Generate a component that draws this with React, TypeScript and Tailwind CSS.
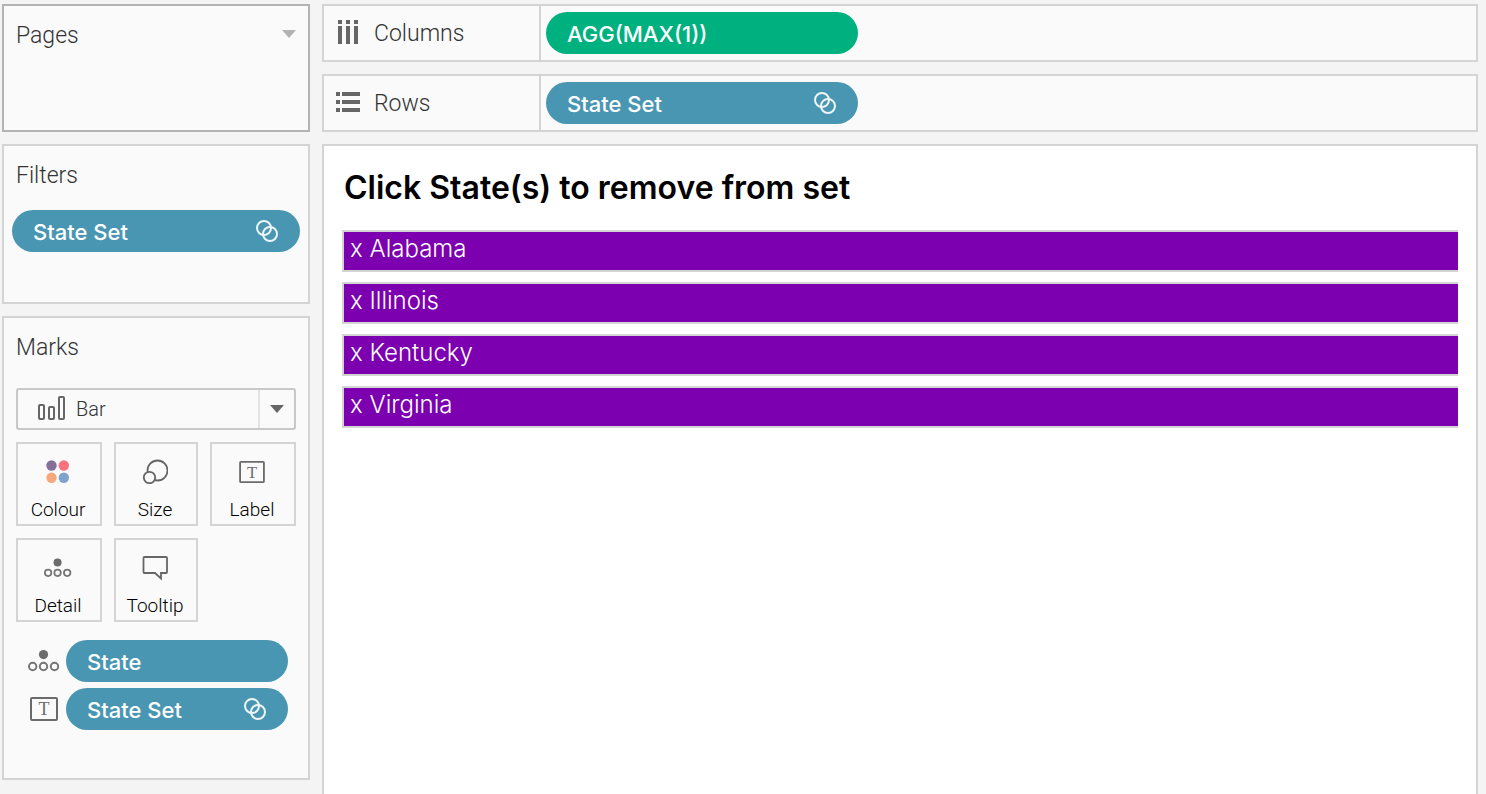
import type { ReactNode } from 'react'
import { clsx } from 'clsx'

function SetIcon() {
  return (
    <svg width="24" height="24" viewBox="0 0 24 24" fill="none" stroke="#eef5f9" strokeWidth="2" aria-hidden="true">
      <circle cx="9" cy="9" r="7" />
      <circle cx="15" cy="15" r="7" />
    </svg>
  )
}

function ColumnsIcon() {
  return (
    <svg width="24" height="24" viewBox="0 0 24 24" fill="#666" aria-hidden="true">
      <path d="M2 0h4v4H2zM10 0h4v4h-4zM18 0h4v4h-4zM2 6h4v18H2zM10 6h4v18h-4zM18 6h4v18h-4z" />
    </svg>
  )
}

function RowsIcon() {
  return (
    <svg width="24" height="24" viewBox="0 0 24 24" fill="#666" aria-hidden="true">
      <path d="M0 2h4v4H0zM0 10h4v4H0zM0 18h4v4H0zM6 2h18v4H6zM6 10h18v4H6zM6 18h18v4H6z" />
    </svg>
  )
}

function BarIcon() {
  return (
    <svg width="28" height="24" viewBox="0 0 28 24" fill="none" stroke="#666" strokeWidth="2" aria-hidden="true">
      <rect x="1" y="9" width="5" height="14" rx="1" />
      <rect x="11" y="11" width="5" height="12" rx="1" />
      <rect x="21" y="1" width="5" height="22" rx="1" />
    </svg>
  )
}

function ColourIcon() {
  return (
    <svg width="24" height="24" viewBox="0 0 24 24" aria-hidden="true">
      <circle cx="5.5" cy="5.5" r="5.2" fill="#85709a" />
      <circle cx="17.8" cy="5.5" r="5.2" fill="#fa7280" />
      <circle cx="5.5" cy="17.8" r="5.2" fill="#f4a87c" />
      <circle cx="17.8" cy="17.8" r="5.2" fill="#7fa3cb" />
    </svg>
  )
}

function SizeIcon() {
  return (
    <svg width="26" height="26" viewBox="0 0 26 26" fill="#fafafa" stroke="#666" strokeWidth="1.8" aria-hidden="true">
      <circle cx="15.5" cy="11.5" r="10" />
      <circle cx="7.5" cy="18.5" r="5.7" />
    </svg>
  )
}

function LabelIcon({ className }: { className?: string }) {
  return (
    <svg className={className} viewBox="0 0 28 24" fill="none" stroke="#6b6b6b" strokeWidth="2" aria-hidden="true">
      <rect x="1" y="1" width="26" height="22" rx="1" />
      <text
        x="14"
        y="18"
        textAnchor="middle"
        fontFamily="Liberation Serif, serif"
        fontSize="18"
        fill="#6b6b6b"
        stroke="none"
      >
        T
      </text>
    </svg>
  )
}

function DetailIcon({ className }: { className?: string }) {
  return (
    <svg className={className} viewBox="0 0 32 22" fill="none" stroke="#757575" strokeWidth="2" aria-hidden="true">
      <circle cx="15.5" cy="4.6" r="4.6" fill="#6b6b6b" stroke="none" />
      <circle cx="4.7" cy="16.5" r="3.7" />
      <circle cx="15.5" cy="16.5" r="3.7" />
      <circle cx="26.5" cy="16.5" r="3.7" />
    </svg>
  )
}

function TooltipIcon() {
  return (
    <svg width="26" height="26" viewBox="0 0 26 26" fill="none" stroke="#666" strokeWidth="1.8" aria-hidden="true">
      <path d="M2.5 2h21.5q1 0 1 1v14q0 1-1 1h-5v5.5l-6-5.5H2.5q-1 0-1-1V3q0-1 1-1z" />
    </svg>
  )
}

function Caret() {
  return (
    <svg width="14" height="8" viewBox="0 0 14 8" fill="currentColor" aria-hidden="true">
      <path d="M0 0h14L7 8z" />
    </svg>
  )
}

type PillProps = {
  label: string
  isSet?: boolean
  className?: string
}

function Pill({ label, isSet, className }: PillProps) {
  return (
    <button
      type="button"
      className={clsx(
        'flex h-[42px] items-center justify-between rounded-full px-[21px] font-[Inter,sans-serif] text-[22px] font-medium text-white',
        className,
      )}
    >
      <span className="pt-[3px]">{label}</span>
      {isSet && <SetIcon />}
    </button>
  )
}

function Shelf({ name, icon, children }: { name: string; icon: ReactNode; children: ReactNode }) {
  return (
    <section aria-label={name} className="flex h-[58px] border-2 border-[#d4d4d4] bg-[#fafafa]">
      <div className="flex w-[217px] shrink-0 items-center gap-[14px] border-r-2 border-[#d4d4d4] pb-[2px] pl-3">
        {icon}
        <h2 className="pt-1 text-[23px] leading-8 font-light">{name}</h2>
      </div>
      <div className="flex min-w-0 flex-1 items-center pl-[5px]">{children}</div>
    </section>
  )
}

const markButtons = [
  { label: 'Colour', icon: <ColourIcon /> },
  { label: 'Size', icon: <SizeIcon /> },
  { label: 'Label', icon: <LabelIcon className="h-[22px] w-[26px]" /> },
  { label: 'Detail', icon: <DetailIcon className="h-5 w-7" /> },
  { label: 'Tooltip', icon: <TooltipIcon /> },
]

const states = ['Alabama', 'Illinois', 'Kentucky', 'Virginia']

function Sidebar() {
  return (
    <aside className="flex w-[308px] shrink-0 flex-col gap-3">
      <section className="flex h-32 items-start justify-between border-2 border-[#b3b3b3] bg-[#fafafa] px-3 pt-3">
        <h2 className="pt-[2px] text-[23px] leading-8 font-light">Pages</h2>
        <button type="button" aria-label="Pages menu" className="flex h-8 items-center text-[#b3b3b3]">
          <Caret />
        </button>
      </section>

      <section className="h-40 border-2 border-[#d4d4d4] bg-[#fafafa] px-2 pt-[14px]">
        <h2 className="px-1 text-[23px] leading-8 font-light">Filters</h2>
        <Pill label="State Set" isSet className="mt-[18px] w-full bg-[#4996b2]" />
      </section>

      <section className="border-2 border-[#d4d4d4] bg-[#fafafa] px-3 pt-[14px] pb-12">
        <h2 className="text-[23px] leading-8 font-light">Marks</h2>

        <div className="relative mt-6">
          <select
            aria-label="Mark type"
            defaultValue="Bar"
            className="h-[42px] w-full appearance-none rounded-[3px] border-2 border-[#c8c8c8] bg-[#fafafa] pl-[58px] text-xl font-light text-[#333]"
          >
            <option>Bar</option>
          </select>
          <span className="pointer-events-none absolute top-2 left-[22px]">
            <BarIcon />
          </span>
          <span className="pointer-events-none absolute inset-y-[2px] right-[2px] flex w-9 items-center justify-center border-l-2 border-[#e2e2e2] text-[#666]">
            <Caret />
          </span>
        </div>

        <div className="mt-3 grid grid-cols-[43fr_42fr_43fr] gap-3">
          {markButtons.map((mark) => (
            <button
              key={mark.label}
              type="button"
              className="flex h-[84px] flex-col items-center border-2 border-[#d4d4d4] pt-3 pr-[2px] text-[19px] leading-6 text-black"
            >
              <span className="flex h-8 items-center">{mark.icon}</span>
              <span className="mt-[10px] font-light">{mark.label}</span>
            </button>
          ))}
        </div>

        <ul className="mt-[18px] flex flex-col gap-[6px] pr-2">
          <li className="flex items-center">
            <span className="flex w-[50px] justify-center pl-[6px]">
              <DetailIcon className="h-[22px] w-8" />
            </span>
            <Pill label="State" className="flex-1 bg-[#4996b2]" />
          </li>
          <li className="flex items-center">
            <span className="flex w-[50px] justify-center pl-[6px]">
              <LabelIcon className="h-6 w-7" />
            </span>
            <Pill label="State Set" isSet className="flex-1 bg-[#4996b2]" />
          </li>
        </ul>
      </section>
    </aside>
  )
}

export default function App() {
  return (
    <div className="flex min-h-screen gap-3 bg-[#f4f4f4] pt-1 pr-2 pl-[2px] font-[Roboto,sans-serif] text-[#333]">
      <Sidebar />

      <div className="flex min-w-0 flex-1 flex-col gap-3">
        <Shelf name="Columns" icon={<ColumnsIcon />}>
          <Pill label="AGG(MAX(1))" className="w-[312px] bg-[#00b180]" />
        </Shelf>
        <Shelf name="Rows" icon={<RowsIcon />}>
          <Pill label="State Set" isSet className="w-[312px] bg-[#4996b2]" />
        </Shelf>

        <main className="flex-1 border-2 border-b-0 border-[#d4d4d4] bg-white px-[18px] pt-[22px] font-[Inter,sans-serif]">
          <h1 className="pl-[2px] text-[32px] leading-10 font-semibold text-black">Click State(s) to remove from set</h1>
          <ul className="mt-[22px] flex flex-col gap-[10px]">
            {states.map((state) => (
              <li key={state}>
                <button
                  type="button"
                  className="flex h-[42px] w-full items-start border-y-2 border-l-2 border-[#d4d4d4] bg-[#7c00b0] pt-px pl-[6px] text-2xl font-light text-white"
                >
                  x {state}
                </button>
              </li>
            ))}
          </ul>
        </main>
      </div>
    </div>
  )
}
